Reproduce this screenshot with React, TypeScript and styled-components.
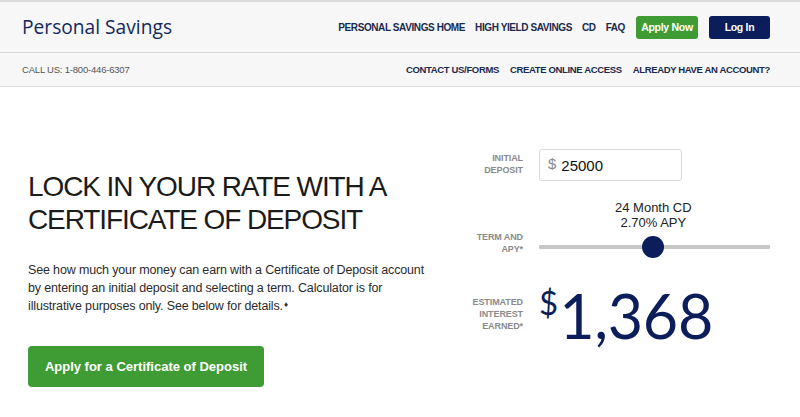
import React from "react";
import styled, { createGlobalStyle } from "styled-components";

const GlobalStyle = createGlobalStyle`
  html, body { margin: 0; padding: 0; background: #fff; }
  body { font-family: "Liberation Sans", Arial, sans-serif; }
  * { box-sizing: border-box; }
`;

const navy = "#0b1d5a";
const green = "#3f9c35";

const TopBar = styled.header`
  border-top: 2px solid #dcdcdc;
  background: #f7f7f7;
  height: 53px;
  border-bottom: 1px solid #d8d8d8;
  display: flex;
  align-items: center;
  justify-content: space-between;
  padding: 0 30px 0 22px;
`;

const Logo = styled.div`
  font-family: "Open Sans", sans-serif;
  font-size: 19.2px;
  font-weight: 400;
  color: #15285e;
  margin-top: -1px;
`;

const Nav = styled.nav`
  display: flex;
  align-items: center;
  gap: 10px;
`;

const NavLink = styled.a`
  font-size: 10px;
  font-weight: 700;
  color: #1a2a4e;
  text-decoration: none;
  letter-spacing: -0.4px;
`;

const HeadBtn = styled.a<{ $bg: string; $w: number }>`
  display: inline-flex;
  align-items: center;
  justify-content: center;
  width: ${(p) => p.$w}px;
  height: 23px;
  border-radius: 3px;
  background: ${(p) => p.$bg};
  color: #fff;
  font-size: 10.5px;
  font-weight: 700;
  letter-spacing: -0.3px;
  text-decoration: none;
  margin-left: 1px;
`;

const SubBar = styled.div`
  background: #f7f7f7;
  height: 34px;
  border-bottom: 1px solid #dcdcdc;
  display: flex;
  align-items: center;
  justify-content: space-between;
  padding: 0 30px 0 22px;
`;

const CallUs = styled.span`
  font-size: 9.5px;
  color: #555;
  letter-spacing: -0.2px;
`;

const SubLinks = styled.div`
  display: flex;
  gap: 11px;
`;

const SubLink = styled.a`
  font-size: 9.5px;
  font-weight: 700;
  color: #1a2a4e;
  text-decoration: none;
  letter-spacing: -0.35px;
`;

const Hero = styled.main`
  display: grid;
  grid-template-columns: 424px 1fr;
  align-items: start;
  padding: 0 30px 0 28px;
`;

const Intro = styled.section`
  padding-top: 83px;
`;

const Heading = styled.h1`
  margin: 0;
  font-family: "Liberation Sans", Arial, sans-serif;
  font-weight: 400;
  font-size: 28px;
  line-height: 33px;
  letter-spacing: -1.1px;
  color: #1b1b1b;
`;

const Lead = styled.p`
  margin: 25px 0 0;
  font-family: "Liberation Sans", Arial, sans-serif;
  font-size: 12.5px;
  line-height: 18px;
  letter-spacing: -0.15px;
  color: #2b2b2b;
  max-width: 410px;
`;

const Mark = styled.span`
  font-size: 8px;
  vertical-align: 3px;
  line-height: 0;
  margin-left: 1px;
`;

const CtaButton = styled.a`
  display: inline-flex;
  align-items: center;
  justify-content: center;
  margin-top: 31px;
  width: 236px;
  height: 41px;
  border-radius: 4px;
  background: ${green};
  color: #fff;
  font-size: 13px;
  font-weight: 700;
  text-decoration: none;
`;

const Calc = styled.section`
  display: grid;
  grid-template-columns: 71px 1fr;
  column-gap: 16px;
  align-content: start;
  align-items: start;
  padding-top: 62px;
`;

const FieldLabel = styled.div<{ $top: number }>`
  text-align: right;
  font-size: 9px;
  font-weight: 700;
  line-height: 12px;
  letter-spacing: -0.1px;
  color: #8a8a8a;
  padding-top: ${(p) => p.$top}px;
`;

const InputBox = styled.div`
  width: 143px;
  height: 32px;
  border: 1px solid #dadada;
  border-radius: 3px;
  display: flex;
  align-items: center;
  padding-left: 8px;
  gap: 5px;
`;

const Dollar = styled.span`
  font-size: 15px;
  color: #8a8a8a;
  margin-top: -4px;
`;

const InputValue = styled.span`
  font-size: 15px;
  color: #111;
  margin-top: 1px;
`;

const SliderWrap = styled.div`
  margin-top: 19px;
  display: flex;
  flex-direction: column;
`;

const SliderCaption = styled.div`
  align-self: flex-start;
  margin-left: 76px;
  text-align: center;
  font-size: 13px;
  line-height: 15px;
  color: #222;
`;

const Track = styled.div`
  position: relative;
  margin-top: 15px;
  height: 4px;
  width: 231px;
  background: #c6c6c6;
  border-radius: 1px;
`;

const Thumb = styled.div`
  position: absolute;
  top: -9px;
  width: 22px;
  height: 22px;
  border-radius: 50%;
  background: ${navy};
  transform: translateX(-50%);
`;

const Result = styled.div`
  display: flex;
  align-items: flex-start;
  margin-top: 32px;
  color: ${navy};
  font-family: "Lato", sans-serif;
  font-weight: 400;
`;

const ResultDollar = styled.span`
  font-size: 33px;
  line-height: 34px;
  margin-top: -2px;
  margin-right: 1px;
`;

const ResultValue = styled.span`
  font-size: 61px;
  line-height: 58px;
  letter-spacing: -0.3px;
`;

export default function App() {
  const thumbPos = 114;
  return (
    <>
      <GlobalStyle />
      <TopBar>
        <Logo>Personal Savings</Logo>
        <Nav>
          <NavLink href="#">PERSONAL SAVINGS HOME</NavLink>
          <NavLink href="#">HIGH YIELD SAVINGS</NavLink>
          <NavLink href="#">CD</NavLink>
          <NavLink href="#">FAQ</NavLink>
          <HeadBtn href="#" $bg={green} $w={62}>Apply Now</HeadBtn>
          <HeadBtn href="#" $bg={navy} $w={61}>Log In</HeadBtn>
        </Nav>
      </TopBar>
      <SubBar>
        <CallUs>CALL US: 1-800-446-6307</CallUs>
        <SubLinks>
          <SubLink href="#">CONTACT US/FORMS</SubLink>
          <SubLink href="#">CREATE ONLINE ACCESS</SubLink>
          <SubLink href="#">ALREADY HAVE AN ACCOUNT?</SubLink>
        </SubLinks>
      </SubBar>
      <Hero>
        <Intro>
          <Heading>
            LOCK IN YOUR RATE WITH A<br />CERTIFICATE OF DEPOSIT
          </Heading>
          <Lead>
            See how much your money can earn with a Certificate of Deposit account
            by entering an initial deposit and selecting a term. Calculator is for
            illustrative purposes only. See below for details.<Mark>♦</Mark>
          </Lead>
          <CtaButton href="#">Apply for a Certificate of Deposit</CtaButton>
        </Intro>
        <Calc>
          <FieldLabel $top={3}>INITIAL<br />DEPOSIT</FieldLabel>
          <InputBox>
            <Dollar>$</Dollar>
            <InputValue>25000</InputValue>
          </InputBox>
          <FieldLabel $top={50}>TERM AND<br />APY*</FieldLabel>
          <SliderWrap>
            <SliderCaption>
              24 Month CD<br />2.70% APY
            </SliderCaption>
            <Track>
              <Thumb style={{ left: thumbPos }} />
            </Track>
          </SliderWrap>
          <FieldLabel $top={41}>ESTIMATED<br />INTEREST<br />EARNED*</FieldLabel>
          <Result>
            <ResultDollar>$</ResultDollar>
            <ResultValue>1,368</ResultValue>
          </Result>
        </Calc>
      </Hero>
    </>
  );
}
